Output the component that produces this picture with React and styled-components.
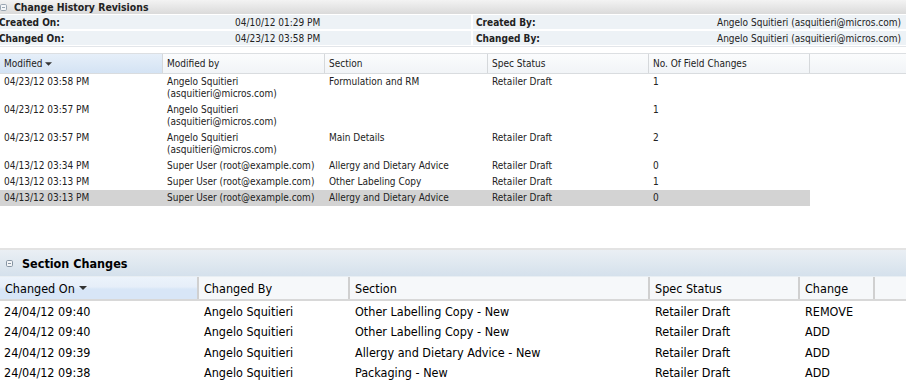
import React from 'react';
import styled, { createGlobalStyle } from 'styled-components';

const FONT = `"DejaVu Sans Condensed", "DejaVu Sans", Tahoma, sans-serif`;

const Global = createGlobalStyle`
  html, body { margin: 0; padding: 0; background: #fff; }
  body { font-family: ${FONT}; }
  * { box-sizing: border-box; }
`;

const Page = styled.div`
  width: 906px;
  height: 383px;
  overflow: hidden;
  display: flex;
  flex-direction: column;
  background: #fff;
`;

/* ---------- top panel ---------- */
const TopPanel = styled.section`
  height: 248px;
  display: flex;
  flex-direction: column;
  flex: none;
`;

const TitleBar = styled.div`
  height: 14px;
  display: flex;
  align-items: center;
  gap: 7px;
  padding-left: 0;
  background: linear-gradient(#f3f3f3, #dadada);
  font-weight: bold;
  font-size: 10.4px;
  color: #222;
`;

const InfoTable = styled.div`
  display: flex;
  flex-direction: column;
  gap: 2px;
  padding: 1px 0 1px;
  border-bottom: 1px solid #e3e6ea;
`;

const InfoRow = styled.div`
  display: grid;
  grid-template-columns: 471px 1fr;
  column-gap: 2px;
`;

const Pair = styled.div`
  display: grid;
  grid-template-columns: ${p => p.$labelWidth}px 1fr;
  align-items: center;
  height: 14px;
  background: #edf2f6;
  font-size: 10px;
  color: #222;
  padding-left: ${p => p.$pad}px;
`;

const Label = styled.span`
  font-weight: bold;
  white-space: nowrap;
`;

const Value = styled.span`
  white-space: nowrap;
`;

const TopGrid = styled.div`
  margin-top: 6px;
  display: flex;
  flex-direction: column;
`;

const topCols = '163px 162px 163px 161px 161px';

const TopHeader = styled.div`
  display: grid;
  grid-template-columns: ${topCols} 1fr;
  height: 21px;
  border-top: 1px solid #dcdfe2;
  border-bottom: 1px solid #d9dcdf;
  background: linear-gradient(#fbfcfd, #f1f4f7);
`;

const TopHeadCell = styled.div`
  display: flex;
  align-items: center;
  gap: 3px;
  padding-left: 4px;
  font-size: 10px;
  color: #222;
  border-right: 1px solid #d5d8db;
  white-space: nowrap;
  ${p => p.$sorted && `background: linear-gradient(#e6eff9, #d4e3f4);`}
  &:last-child { border-right: none; }
`;

const TopRow = styled.div`
  display: grid;
  grid-template-columns: ${topCols};
  width: 810px;
  padding: 2px 0;
  font-size: 10px;
  line-height: 12px;
  color: #222;
  background: ${p => (p.$selected ? '#d3d3d3' : 'transparent')};
`;

const TopCell = styled.div`
  padding-left: 4px;
  white-space: nowrap;
`;

/* ---------- bottom panel ---------- */
const BottomPanel = styled.section`
  flex: 1;
  display: flex;
  flex-direction: column;
  border-top: 2px solid #e3e3e3;
`;

const SectionBar = styled.div`
  height: 27px;
  display: flex;
  align-items: center;
  gap: 9px;
  padding-left: 6px;
  padding-top: 1px;
  background: linear-gradient(#eaeff4, #d5e1ec);
  border-bottom: 1px solid #e8eef3;
  font-weight: bold;
  font-size: 12.5px;
  color: #000;
`;

const botCols = '199px 151px 300px 150px 75px';

const BotHeader = styled.div`
  display: grid;
  grid-template-columns: ${botCols} 1fr;
  height: 24px;
  background: #f6f8fa;
  border-bottom: 2px solid #d8d8d8;
`;

const BotHeadCell = styled.div`
  display: flex;
  align-items: center;
  gap: 4px;
  padding-left: 5px;
  font-size: 12.5px;
  color: #000;
  border-right: 2px solid #d0d0d0;
  white-space: nowrap;
  ${p => p.$sorted && `background: linear-gradient(#ecf3fb 0%, #e6eef9 45%, #d8e6f7 55%, #d8e6f7 100%);`}
  &:last-child { border-right: none; }
`;

const BotRow = styled.div`
  display: grid;
  grid-template-columns: ${botCols} 1fr;
  height: 20.5px;
  align-items: center;
  font-size: 12.5px;
  color: #000;
`;

const BotCell = styled.div`
  padding-left: 5px;
  white-space: nowrap;
  &:first-child { padding-left: 4px; }
`;

/* ---------- icons ---------- */
const CollapseIcon = ({ color = '#9aa6b2', style }) => (
  <svg width="7" height="7" viewBox="0 0 7 7" style={style}>
    <rect x="0.5" y="0.5" width="6" height="6" rx="1.2" fill="#f4f6f8" stroke={color} />
    <line x1="2" y1="3.5" x2="5" y2="3.5" stroke={color} />
  </svg>
);

const SortArrow = ({ w = 7 }) => (
  <svg width={w} height="4" viewBox="0 0 8 4">
    <polygon points="0,0 8,0 4,4" fill="#333" />
  </svg>
);

/* ---------- data ---------- */
const revisions = [
  ['04/23/12 03:58 PM', ['Angelo Squitieri', '(asquitieri@micros.com)'], 'Formulation and RM', 'Retailer Draft', '1'],
  ['04/23/12 03:57 PM', ['Angelo Squitieri', '(asquitieri@micros.com)'], '', '', '1'],
  ['04/23/12 03:57 PM', ['Angelo Squitieri', '(asquitieri@micros.com)'], 'Main Details', 'Retailer Draft', '2'],
  ['04/13/12 03:34 PM', ['Super User (root@example.com)'], 'Allergy and Dietary Advice', 'Retailer Draft', '0'],
  ['04/13/12 03:13 PM', ['Super User (root@example.com)'], 'Other Labeling Copy', 'Retailer Draft', '1'],
  ['04/13/12 03:13 PM', ['Super User (root@example.com)'], 'Allergy and Dietary Advice', 'Retailer Draft', '0', true],
];

const changes = [
  ['24/04/12 09:40', 'Angelo Squitieri', 'Other Labelling Copy - New', 'Retailer Draft', 'REMOVE'],
  ['24/04/12 09:40', 'Angelo Squitieri', 'Other Labelling Copy - New', 'Retailer Draft', 'ADD'],
  ['24/04/12 09:39', 'Angelo Squitieri', 'Allergy and Dietary Advice - New', 'Retailer Draft', 'ADD'],
  ['24/04/12 09:38', 'Angelo Squitieri', 'Packaging - New', 'Retailer Draft', 'ADD'],
];

export default function App() {
  return (
    <Page>
      <Global />
      <TopPanel>
        <TitleBar>
          <CollapseIcon style={{ marginTop: 1 }} />
          <span>Change History Revisions</span>
        </TitleBar>
        <InfoTable>
          <InfoRow>
            <Pair $labelWidth={235} $pad={0}>
              <Label style={{ marginLeft: -1 }}>Created On:</Label>
              <Value>04/10/12 01:29 PM</Value>
            </Pair>
            <Pair $labelWidth={241} $pad={3}>
              <Label>Created By:</Label>
              <Value>Angelo Squitieri (asquitieri@micros.com)</Value>
            </Pair>
          </InfoRow>
          <InfoRow>
            <Pair $labelWidth={235} $pad={0}>
              <Label style={{ marginLeft: -1 }}>Changed On:</Label>
              <Value>04/23/12 03:58 PM</Value>
            </Pair>
            <Pair $labelWidth={241} $pad={3}>
              <Label>Changed By:</Label>
              <Value>Angelo Squitieri (asquitieri@micros.com)</Value>
            </Pair>
          </InfoRow>
        </InfoTable>
        <TopGrid>
          <TopHeader>
            <TopHeadCell $sorted>Modified <SortArrow /></TopHeadCell>
            <TopHeadCell>Modified by</TopHeadCell>
            <TopHeadCell>Section</TopHeadCell>
            <TopHeadCell>Spec Status</TopHeadCell>
            <TopHeadCell>No. Of Field Changes</TopHeadCell>
            <TopHeadCell />
          </TopHeader>
          {revisions.map((r, i) => (
            <TopRow key={i} $selected={r[5]}>
              <TopCell>{r[0]}</TopCell>
              <TopCell>
                {r[1].map((l, j) => (
                  <div key={j}>{l}</div>
                ))}
              </TopCell>
              <TopCell>{r[2]}</TopCell>
              <TopCell>{r[3]}</TopCell>
              <TopCell>{r[4]}</TopCell>
            </TopRow>
          ))}
        </TopGrid>
      </TopPanel>

      <BottomPanel>
        <SectionBar>
          <CollapseIcon color="#8795a3" />
          <span>Section Changes</span>
        </SectionBar>
        <BotHeader>
          <BotHeadCell $sorted>Changed On <SortArrow w={8} /></BotHeadCell>
          <BotHeadCell>Changed By</BotHeadCell>
          <BotHeadCell>Section</BotHeadCell>
          <BotHeadCell>Spec Status</BotHeadCell>
          <BotHeadCell>Change</BotHeadCell>
          <BotHeadCell />
        </BotHeader>
        {changes.map((r, i) => (
          <BotRow key={i}>
            {r.map((c, j) => (
              <BotCell key={j}>{c}</BotCell>
            ))}
            <BotCell />
          </BotRow>
        ))}
      </BottomPanel>
    </Page>
  );
}
